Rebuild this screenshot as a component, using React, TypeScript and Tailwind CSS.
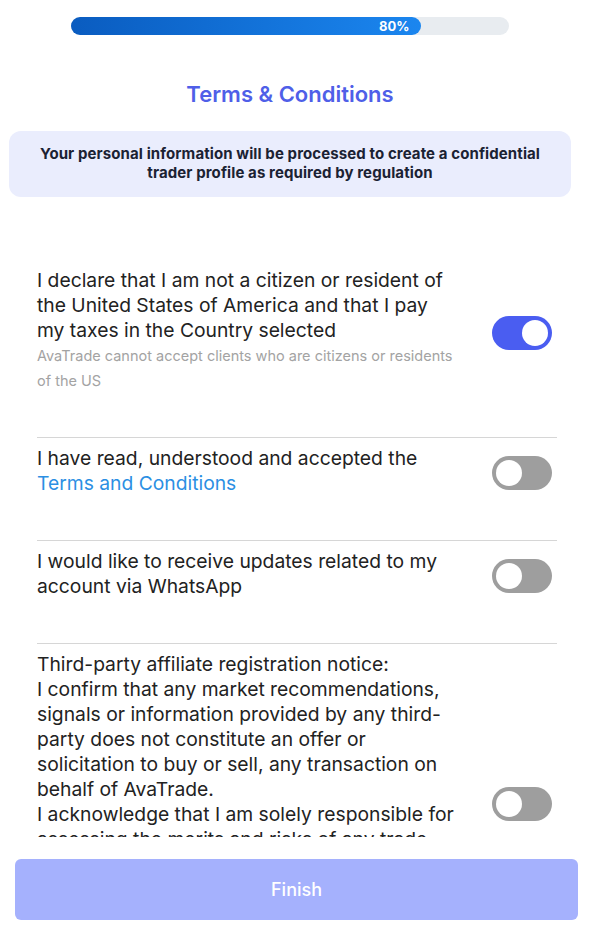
import { useState } from 'react';

type Item = {
    id: string;
    body: React.ReactNode;
    note?: string;
    on: boolean;
};

function Toggle({ on, onClick }: { on: boolean; onClick: () => void }) {
    return (
        <button
            type="button"
            onClick={onClick}
            className={`relative block shrink-0 w-[60px] h-[34px] rounded-full transition-colors ${
                on ? 'bg-[#4a5df1]' : 'bg-[#9e9e9e]'
            }`}
        >
            <span
                className={`absolute top-[4px] w-[26px] h-[26px] rounded-full bg-white transition-all ${
                    on ? 'left-[30px]' : 'left-[4px]'
                }`}
            />
        </button>
    );
}

export default function App() {
    const [items, setItems] = useState<Item[]>([
        {
            id: 'us',
            body: 'I declare that I am not a citizen or resident of the United States of America and that I pay my taxes in the Country selected',
            note: 'AvaTrade cannot accept clients who are citizens or residents of the US',
            on: true,
        },
        {
            id: 'terms',
            body: (
                <>
                    I have read, understood and accepted the{' '}
                    <a href="#" className="text-[#2b8fe3]">
                        Terms and Conditions
                    </a>
                </>
            ),
            on: false,
        },
        {
            id: 'whatsapp',
            body: 'I would like to receive updates related to my account via WhatsApp',
            on: false,
        },
        {
            id: 'affiliate',
            body: (
                <>
                    Third-party affiliate registration notice:
                    <br />
                    I confirm that any market recommendations, signals or information provided by any third-party does
                    not constitute an offer or solicitation to buy or sell, any transaction on behalf of AvaTrade.
                    <br />
                    I acknowledge that I am solely responsible for assessing the merits and risks of any trade and that
                    AvaTrade bears no responsibility for any loss incurred as a result of such recommendations, signals
                    or information provided by third parties.
                </>
            ),
            on: false,
        },
    ]);

    const flip = (id: string) =>
        setItems(items.map((it) => (it.id === id ? { ...it, on: !it.on } : it)));

    return (
        <div className="h-[934px] flex flex-col bg-white font-['Inter','Noto_Sans',sans-serif] text-[#222]">
            {/* scrollable part */}
            <div className="flex-1 overflow-hidden">
                <div className="w-[580px] px-[9px] pt-[17px]">
                    <div className="relative w-[438px] h-[18px] mx-auto rounded-full bg-[#e8ecf0]">
                        <div className="h-full w-[80%] rounded-full bg-gradient-to-r from-[#0a5cc0] to-[#1b86ef] flex items-center justify-end pr-[12px]">
                            <span className="text-[13px] font-bold text-white leading-none">80%</span>
                        </div>
                    </div>

                    <h1 className="mt-[45px] text-center text-[22px] leading-[28px] font-semibold text-[#4f5fe8]">
                        Terms &amp; Conditions
                    </h1>

                    <div className="mt-[23px] rounded-[12px] bg-[#eaedfd] pt-[13px] pb-[15px] px-2 text-center text-[15px] leading-[19px] font-bold tracking-[0.1px] text-[#1b2233]">
                        Your personal information will be processed to create a confidential
                        <br />
                        trader profile as required by regulation
                    </div>

                    <ul className="mt-[63px] pl-[28px] pr-[14px]">
                        {items.map((it) => (
                            <li
                                key={it.id}
                                className="flex items-center justify-between pt-[8px] pb-[44px] border-b border-[#d6d6d6]"
                            >
                                <div className="w-[420px]">
                                    <p className="text-[19.3px] leading-[25px]">{it.body}</p>
                                    {it.note && (
                                        <p className="text-[14.5px] leading-[25px] text-[#a3a3a3]">{it.note}</p>
                                    )}
                                </div>
                                <div className="flex pr-[5px] pt-[4px]">
                                    <Toggle on={it.on} onClick={() => flip(it.id)} />
                                </div>
                            </li>
                        ))}
                    </ul>
                </div>
            </div>

            {/* footer */}
            <div className="h-[97px] shrink-0 bg-white pt-[22px] pl-[15px]">
                <button
                    type="button"
                    className="w-[563px] h-[61px] rounded-[6px] bg-[#a5b1fd] text-white text-[18px] font-medium"
                >
                    Finish
                </button>
            </div>
        </div>
    );
}
